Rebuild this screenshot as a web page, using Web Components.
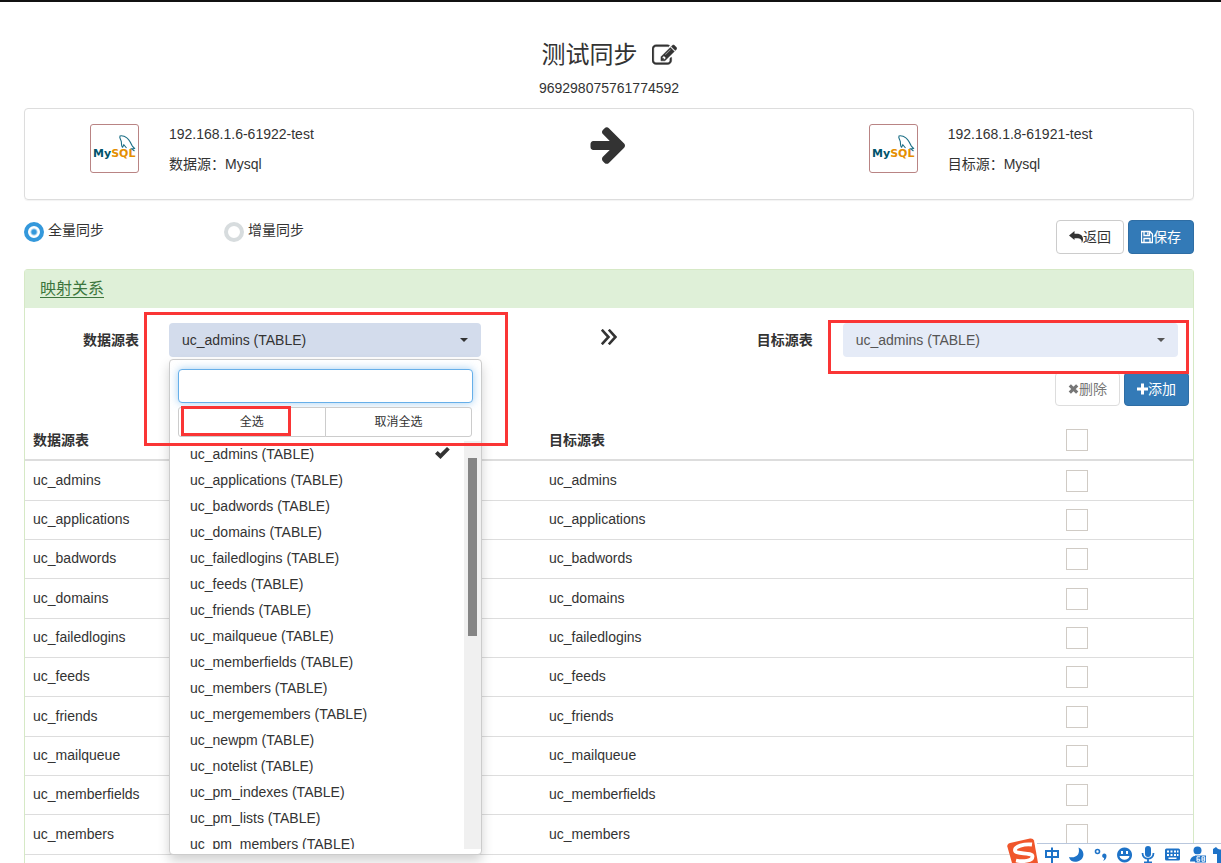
<!DOCTYPE html>
<html lang="zh-CN">
<head>
<meta charset="utf-8">
<title>测试同步</title>
<style>
html,body{margin:0;height:100%}
body{overflow:hidden;background:#fff;color:#333;font:14px/20px "Liberation Sans","Noto Sans CJK SC",sans-serif}
</style>
</head>
<body>
<sync-page></sync-page>
<script>
const define = (name, html, setup) => {
  const tpl = document.createElement('template');
  tpl.innerHTML = html;
  customElements.define(name, class extends HTMLElement {
    constructor() {
      super();
      this.attachShadow({mode: 'open'}).append(tpl.content.cloneNode(true));
    }
    connectedCallback() { if (setup) setup(this, this.shadowRoot); }
  });
};

const ICONS = {
  edit: ['0 0 1792 1792', 25, 25, '<path d="M888 1184l116-116-152-152-116 116v56h96v96h56zm440-720q-16-16-33 1l-350 350q-17 17-1 33t33-1l350-350q17-17 1-33zm80 594v190q0 119-84.500 203.500t-203.500 84.500h-832q-119 0-203.500-84.500t-84.500-203.500v-832q0-119 84.500-203.500t203.500-84.500h832q63 0 117 25 15 7 18 23 3 17-9 29l-49 49q-14 14-32 8-23-6-45-6h-832q-66 0-113 47t-47 113v832q0 66 47 113t113 47h832q66 0 113-47t47-113v-126q0-13 9-22l64-64q15-15 35-7t20 29zm-96-738l288 288-672 672h-288v-288zm444 132l-92 92-288-288 92-92q28-28 68-28t68 28l152 152q28 28 28 68t-28 68z" stroke="currentColor" stroke-width="30"/>'],
  arrow: ['64 180 1536 1560', 36, 37, '<path d="M1600 960q0 54-37 91l-651 651q-39 37-91 37-51 0-90-37l-75-75q-38-38-38-91t38-91l293-293h-704q-52 0-84.500-37.500t-32.500-90.500v-128q0-53 32.500-90.500t84.500-37.500h704l-293-294q-38-36-38-90t38-90l75-75q38-38 90-38 53 0 91 38l651 651q37 35 37 90z"/>'],
  chevrons: ['0 0 16 16', 16, 16, '<path d="M.8.7 7.500 8l-6.700 7.300M7.800.7 14.500 8l-6.700 7.300" fill="none" stroke="currentColor" stroke-width="2.600"/>'],
  reply: ['0 0 14 14', 14, 14, '<path d="M0 5.500 5.500 1v2.700h2.300c4.200 0 6.200 2.400 6.200 5.500 0 1.600-.6 2.900-1.200 3.800.2-3.500-1.500-4.800-5-4.800H5.500V10z"/>'],
  save: ['0 0 12 14', 12, 14, '<path d="M.5 1.500h8.400l2.600 2.700v8.300H.5zM3 1.500v4h5.500v-4M3 12.500V8.500h6v4M6.800 2.500v2" fill="none" stroke="currentColor" stroke-width="1.300"/>'],
  times: ['0 0 11 14', 11, 14, '<path d="m1.800 3.300 7.400 7.400m0-7.400-7.400 7.400" fill="none" stroke="currentColor" stroke-width="3.200"/>'],
  plus: ['0 0 11 14', 11, 14, '<path d="M4 1.500h3V5.500h4v3H7v4H4v-4H0v-3h4z"/>'],
  check: ['0 0 15 12', 15, 12, '<path d="m0 6.700 2.700-2.700 2.700 2.400L12 0l2.800 2.500-9.300 9.400z"/>'],
  caret: ['0 0 8 4', 8, 4, '<path d="M0 0h8L4 4z"/>']
};
define('ui-icon', '<style>:host{display:inline-block;line-height:0;flex:none}svg{display:block}</style><span></span>', (el, root) => {
  const [box, w, h, body] = ICONS[el.getAttribute('name')];
  root.querySelector('span').innerHTML = `<svg viewBox="${box}" width="${w}" height="${h}" fill="currentColor" aria-hidden="true">${body}</svg>`;
});

define('ui-button', `<style>
:host{display:inline-block}
button{display:flex;align-items:center;height:34px;padding:0 12px;border:1px solid #ccc;border-radius:4px;background:#fff;color:#333;font:inherit;white-space:nowrap}
:host([kind=primary]) button{background:#337ab7;border-color:#2e6da4;color:#fff}
:host([kind=muted]) button{color:#777;border-color:#ddd}
</style><button type="button"><slot></slot></button>`);

define('ui-radio', `<style>
:host{display:block;width:200px}
label{display:flex;gap:4px}
input{appearance:none;box-sizing:border-box;width:20px;height:20px;margin:2px 0 0;border:4px solid #d7dcde;border-radius:50%;background:#fff}
input:checked{border-color:#3498db;background:radial-gradient(circle,#3498db 2px,#fff 4px)}
</style><label><input type="radio"><slot></slot></label>`, (el, root) => {
  root.querySelector('input').checked = el.hasAttribute('checked');
});

define('mysql-logo', `<style>
:host{display:block;box-sizing:border-box;width:49px;height:49px;border:1px solid #b98484;border-radius:3px}
svg{display:block}
text{font:bold 11px "DejaVu Sans",sans-serif}
</style><svg width="47" height="47" viewBox="0 0 47 47" role="img" aria-label="MySQL">
<text x="2" y="32" fill="#00546b">My<tspan fill="#e48e00">SQL</tspan></text>
<path d="M31.500 22.500c-1.500-2-.8-4-1.200-6-.5-2-2.300-4-1.300-5.500 2-1 4 .5 5 .7 4 1.800 5.500 5.500 7 8.800.6 1.300 1.500 1.500 2.500 3l-3 .2 3 2.300M31.500 22.500l1.300-2.800 2.700 3.300" fill="none" stroke="#1c6f86" stroke-width="1.100"/>
</svg>`);

define('data-endpoint', `<style>
:host{display:flex;gap:30px;padding:0 0 0 65px}
p{margin:0 0 10px;white-space:nowrap}
</style><mysql-logo></mysql-logo><div><p><slot name="host"></slot></p><p><slot></slot></p></div>`);

define('table-select', `<style>
:host{display:grid;position:relative;min-width:0}
select{appearance:none;grid-area:1/1;width:100%;height:34px;padding:0 13px;border:0;border-radius:4px;background:#d3dcec;color:#333;font:inherit;opacity:1}
ui-icon{grid-area:1/1;place-self:center end;margin-right:13px;pointer-events:none}
:host([muted]) select{background:#e5ebf7;color:#555}
:host([muted]) ui-icon{color:#555}
</style><select><option>uc_admins (TABLE)</option></select><ui-icon name="caret"></ui-icon><slot></slot>`, (el, root) => {
  root.querySelector('select').setAttribute('aria-label', el.getAttribute('label'));
});

define('table-menu', `<style>
:host{display:flex;flex-direction:column;position:absolute;z-index:2;top:36px;left:0;right:-1px;height:496px;box-sizing:border-box;padding-bottom:5px;border:1px solid #ccc;border-radius:4px;background:#fff;box-shadow:0 6px 12px rgba(0,0,0,.18)}
input{box-sizing:border-box;height:34px;margin:9px 8px 0;padding:0 12px;border:1px solid #66afe9;border-radius:4px;outline:0;font:inherit;box-shadow:0 0 8px rgba(102,175,233,.6)}
.all{display:flex;position:relative;margin:4px 9px 4px 8px}
.all button{flex:1;height:30px;padding:0;border:1px solid #ccc;background:#fff;color:#333;font:12px/18px "Liberation Sans","Noto Sans CJK SC",sans-serif}
.all button:first-child{border-radius:3px 0 0 3px}
.all button+button{margin-left:-1px;border-radius:0 3px 3px 0}
.view{display:flex;flex:1;min-height:0}
ul{flex:1;margin:0;padding:0;list-style:none;overflow:hidden}
li{display:flex;justify-content:space-between;height:26px;padding:0 14px 0 20px;line-height:26px;white-space:nowrap}
li ui-icon{margin-top:6px}
.bar{width:17px;padding-top:17px;box-sizing:border-box;background:#f0f0f0}
.thumb{width:9px;height:178px;margin:auto;margin-top:0;background:#858585}
</style>
<input type="text" aria-label="搜索">
<div class="all"><button type="button">全选</button><button type="button">取消全选</button><slot></slot></div>
<div class="view"><ul role="listbox" aria-label="数据源表"></ul><div class="bar"><div class="thumb"></div></div></div>`, (el, root) => {
  const names = ['admins','applications','badwords','domains','failedlogins','feeds','friends','mailqueue','memberfields','members','mergemembers','newpm','notelist','pm_indexes','pm_lists','pm_members'];
  root.querySelector('ul').innerHTML = names.map((n, i) =>
    `<li role="option" aria-selected="${!i}">uc_${n} (TABLE)${i ? '' : '<ui-icon name="check"></ui-icon>'}</li>`).join('');
});

define('red-mark', `<style>
:host{position:absolute;z-index:3;box-sizing:border-box;border:3px solid #fa3535;pointer-events:none}
:host([area=source]){inset:-11px -27px auto -25px;height:134px}
:host([area=target]){inset:-3px -11px auto -15px;height:54px}
:host([area=all]){top:-1px;left:3px;width:110px;height:30px}
</style>`);

define('mapping-table', `<style>
:host{display:block}
table{width:100%;table-layout:fixed;border-collapse:separate;border-spacing:0}
th,td{box-sizing:border-box;height:39px;padding:0 8px;border-bottom:1px solid #ddd;text-align:left;font-weight:400}
tr:nth-child(3n+1) td{height:40px}
thead th{height:40px;font-weight:700;border-bottom-width:2px}
th:last-child{width:136px}
th:last-child,td:last-child{padding-left:9px}
input{appearance:none;display:block;box-sizing:border-box;width:22px;height:22px;margin:0;border:1px solid #d0cbc5;background:#fff}
td{padding-bottom:2px}
td input{margin-top:2px}
</style><table><thead><tr><th>数据源表</th><th>目标源表</th><th><input type="checkbox" aria-label="全部"></th></tr></thead><tbody></tbody></table>`, (el, root) => {
  const names = ['admins','applications','badwords','domains','failedlogins','feeds','friends','mailqueue','memberfields','members'];
  root.querySelector('tbody').innerHTML = names.map(n =>
    `<tr><td>uc_${n}</td><td>uc_${n}</td><td><input type="checkbox" aria-label="uc_${n}"></td></tr>`).join('');
});

define('ime-bar', `<style>
:host{display:block;position:fixed;z-index:4;right:0;bottom:0;width:214px;height:25px}
svg{display:block}
</style><svg width="214" height="25" viewBox="0 0 214 25">
<path d="M24 5h190v20H24z" fill="#fff"/><path d="M30 5.500h184" stroke="#b9c7dd"/>
<path d="m3 5 20-4.500q3-.5 4 2L31 25H5L.3 8.500Q0 6 3 5z" fill="#f0562b"/>
<path d="M25 6.500C17 5.500 7.500 8.500 8 12.500S25.500 14 25.500 18.500 16 24 9 22.500" fill="none" stroke="#fff" stroke-width="3.800"/>
<g fill="#1e73c8">
<path d="M39 13h12v6H39zM45 9.500v15.500" fill="none" stroke="#1e73c8" stroke-width="2"/>
<path d="M71.500 9.500c2 7-2.500 11-9.500 9.500 1 4.500 5 5.500 8.500 4.500 4-1 6.500-4.500 5.800-8.300-.5-2.600-2-4.700-4.800-5.700z"/>
<circle cx="90.500" cy="13.500" r="2" fill="none" stroke="#1e73c8" stroke-width="1.600"/>
<path d="M95.500 16.500c1.500-2 4.200-.8 4 1.700-.2 2.500-1.500 4-3.500 4.800 1-1.500 1.300-2.200 1-3-1.700-.3-2.300-2-1.500-3.500z"/>
<path fill-rule="evenodd" d="M117.500 9.500a7.500 7.500 0 1 0 .1 0zM114 13h2v3h-2zm5 0h2v3h-2zm-6.500 5h10c-.8 5-9.200 5-10 0z"/>
<rect x="138" y="8" width="6" height="11" rx="3"/>
<path d="M135.500 15c0 7.500 11 7.500 11 0M141 21v4M137 24.300h8" fill="none" stroke="#1e73c8" stroke-width="1.800"/>
<path fill-rule="evenodd" d="M159.500 10.500h12q1.500 0 1.500 1.500v9q0 1.500-1.500 1.500h-12q-1.500 0-1.500-1.500v-9q0-1.500 1.500-1.500zm.5 2v2h2v-2zm3.500 0v2h2v-2zm3.500 0v2h2v-2zm3 0v2h1.500v-2zM160 16v2h2v-2zm3.500 0v2h2v-2zm3.500 0v2h2v-2zm3 0v2h1.500v-2zM161.500 19.500v1.500h8v-1.500z"/>
<circle cx="190.500" cy="12.500" r="4"/><path d="M183 23.500c0-8 15-8 15 0z"/>
<path d="M188 16.500h12V25h-12z" fill="#fff"/><path d="M188 17.500h11v7h-11z"/>
<path d="m206 11 3-2c2 2.500 4 2.500 5 2.500v13.500h-4v-9h-4z"/>
</g>
<path d="M193 18.800h-3v4.400h2.700v-2H190M195 18.800h2.700v4.400H195zm0 2.200h2.700" fill="none" stroke="#fff" stroke-width="1"/>
</svg>`);

define('sync-page', `<style>
:host{display:flex;flex-direction:column;box-sizing:border-box;height:100vh;overflow:hidden;padding:0 27px 0 24px;border-top:2px solid #111}
header{display:flex;flex-direction:column;align-items:center}
h1{display:flex;align-items:center;gap:14px;margin:38px 0 8px;height:30px;font-size:24px;line-height:30px;font-weight:400}
.ends{display:grid;grid-template-columns:repeat(3,1fr);box-sizing:border-box;height:92px;flex:none;margin-top:10px;padding-top:15px;border:1px solid #ddd;border-radius:4px;box-shadow:0 1px 1px rgba(0,0,0,.05)}
.ends>ui-icon{justify-self:center;padding:3px 3px 0 0}
.tools{display:flex;margin:20px 0 15px}
.tools div{display:flex;gap:4px;margin-left:auto}
.panel{flex:1 0 auto;border:1px solid #d6e9c6;border-bottom:0;border-radius:4px 4px 0 0}
h2{margin:0;padding:9px 15px;height:20px;background:#dff0d8;font-size:16px;line-height:20px;font-weight:400}
a{color:#3c763d;text-underline-offset:3px}
.map{display:grid;grid-template-columns:repeat(3,1fr);padding-top:15px;height:34px}
.side{display:grid;grid-template-columns:114px 1fr;column-gap:30px;align-items:center;margin-right:-67px}
.side.to{grid-template-columns:auto 1fr;margin:0 15px 0 -47px}
.side b{text-align:right;line-height:34px}
.map>ui-icon{justify-self:center;padding-top:6px}
.edit{display:flex;justify-content:flex-end;gap:4px;padding:15px 4px}
</style>
<header><h1>测试同步 <ui-icon name="edit"></ui-icon></h1><div>969298075761774592</div></header>
<section class="ends">
<data-endpoint><span slot="host">192.168.1.6-61922-test</span>数据源：Mysql</data-endpoint>
<ui-icon name="arrow"></ui-icon>
<data-endpoint><span slot="host">192.168.1.8-61921-test</span>目标源：Mysql</data-endpoint>
</section>
<div class="tools"><ui-radio checked>全量同步</ui-radio><ui-radio>增量同步</ui-radio>
<div><ui-button><ui-icon name="reply"></ui-icon>返回</ui-button><ui-button kind="primary"><ui-icon name="save"></ui-icon>保存</ui-button></div></div>
<section class="panel">
<h2><a href="#">映射关系</a></h2>
<div class="map">
<div class="side"><b>数据源表</b><table-select label="数据源表"><table-menu><red-mark area="all"></red-mark></table-menu><red-mark area="source"></red-mark></table-select></div>
<ui-icon name="chevrons"></ui-icon>
<div class="side to"><b>目标源表</b><table-select muted label="目标源表"><red-mark area="target"></red-mark></table-select></div>
</div>
<div class="edit"><ui-button kind="muted"><ui-icon name="times"></ui-icon>删除</ui-button><ui-button kind="primary"><ui-icon name="plus"></ui-icon>添加</ui-button></div>
<mapping-table></mapping-table>
</section>
<ime-bar></ime-bar>`);
</script>
</body>
</html>
